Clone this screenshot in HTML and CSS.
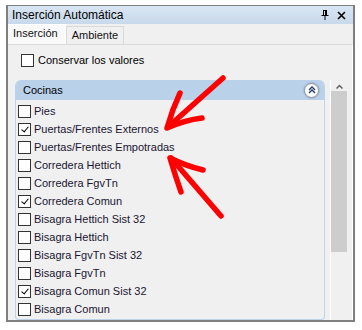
FILE: index.html
```html
<!DOCTYPE html>
<html lang="es">
<head>
  <meta charset="UTF-8" />
  <title>Inserción Automática</title>
  <link rel="stylesheet" href="styles.css">
</head>
<body>
  <div class="window">
    <div class="titlebar">
      <span class="title">Inserción Automática</span>
      <span class="tools">
        <svg width="8" height="10" viewBox="0 0 8 10"><path d="M2 0.5h4M2.5 0.5v5M5.5 0.5v5M4.5 0.5v5M0.5 5.5h7M4 5.5v4.5" stroke="#000" stroke-width="1" fill="none"/></svg>
        <svg width="9" height="9" viewBox="0 0 9 9"><path d="M1 1l7 7M8 1l-7 7" stroke="#000" stroke-width="1.6" fill="none"/></svg>
      </span>
    </div>
    <div class="tabs">
      <div class="tab active">Inserción</div>
      <div class="tab">Ambiente</div>
    </div>
    <div class="panel">
      <label class="keep"><span class="box"></span>Conservar los valores</label>
      <div class="content">
        <div class="group">
          <div class="group-head">
            <span>Cocinas</span>
            <span class="collapse">
              <svg width="8" height="8" viewBox="0 0 8 8"><path d="M1 4l3-3 3 3M1 7l3-3 3 3" stroke="#22386a" stroke-width="1.4" fill="none"/></svg>
            </span>
          </div>
          <div class="list">
            <label class="item"><span class="box"></span>Pies</label>
            <label class="item"><span class="box checked"></span>Puertas/Frentes Externos</label>
            <label class="item"><span class="box"></span>Puertas/Frentes Empotradas</label>
            <label class="item"><span class="box"></span>Corredera Hettich</label>
            <label class="item"><span class="box"></span>Corredera FgvTn</label>
            <label class="item"><span class="box checked"></span>Corredera Comun</label>
            <label class="item"><span class="box"></span>Bisagra Hettich Sist 32</label>
            <label class="item"><span class="box"></span>Bisagra Hettich</label>
            <label class="item"><span class="box"></span>Bisagra FgvTn Sist 32</label>
            <label class="item"><span class="box"></span>Bisagra FgvTn</label>
            <label class="item"><span class="box checked"></span>Bisagra Comun Sist 32</label>
            <label class="item"><span class="box"></span>Bisagra Comun</label>
          </div>
        </div>
        <div class="scrollbar">
          <div class="arrow-up">
            <svg width="7" height="5" viewBox="0 0 7 5"><path d="M0.5 4.5l3-3 3 3" stroke="#606060" stroke-width="1.5" fill="none"/></svg>
          </div>
          <div class="thumb"></div>
        </div>
      </div>
    </div>
  </div>

  <svg class="marks" width="362" height="330" viewBox="0 0 362 330">
    <g stroke="#ff0000" stroke-width="5.5" stroke-linecap="round" stroke-linejoin="round" fill="none">
      <path d="M223 78L168 127"/>
      <path d="M180 93Q172 110 167 128Q185 120 202 118"/>
      <path d="M221 216L171 158"/>
      <path d="M181 192Q175 175 170 158Q186 166 203 170"/>
    </g>
  </svg>
</body>
</html>
```

FILE: styles.css
```css
* { box-sizing: border-box; }
html, body { margin: 0; padding: 0; background: #fff; font-family: "Liberation Sans", Arial, sans-serif; font-size: 11px; color: #111; }
.window { margin: 5px 0 0 6px; width: 349px; height: 317px; border: 2px solid #7f7f7f; border-top-width: 1px; background: #f0f0f0; display: flex; flex-direction: column; }
.titlebar { height: 18px; flex: none; display: flex; align-items: center; justify-content: space-between; padding: 0 7px 0 4px; background: linear-gradient(#d9e6f3, #c7d9eb); font-size: 12px; color: #000; }
.tools { display: flex; align-items: center; gap: 8px; }
.tools svg { display: block; }
.tabs { height: 20px; flex: none; display: flex; align-items: flex-end; padding-left: 0; }
.tab { height: 18px; padding: 0 5px; line-height: 17px; border: 1px solid #d9d9d9; border-bottom: none; background: #f0f0f0; }
.tab.active { height: 20px; padding: 0 7px 0 5px; line-height: 17px; background: #f9f9f9; border-color: #fff; border-left: none; }
.panel { flex: 1; min-height: 0; display: flex; flex-direction: column; padding: 8px 4px 0 7px; border-top: 1px solid #dcdcdc; border-right: 1px solid #fff; }
.keep { display: flex; align-items: center; height: 14px; margin: 0 0 13px 6px; gap: 4px; color: #000; }
.box { width: 13px; height: 13px; flex: none; border: 1px solid #333; background: #fff; position: relative; }
.box.checked::after { content: ""; position: absolute; left: 3.5px; top: 1px; width: 3px; height: 6px; border: solid #000; border-width: 0 1.6px 1.6px 0; transform: rotate(40deg); }
.content { flex: 1; min-height: 0; display: flex; gap: 5px; }
.group { flex: 1; display: flex; flex-direction: column; border: 1px solid #bcd3ea; border-top: none; border-radius: 6px 6px 4px 4px; overflow: hidden; }
.group-head { height: 20px; flex: none; display: flex; align-items: center; justify-content: space-between; padding: 0 5px 0 7px; background: #bad1ea; color: #000; }
.collapse { width: 15px; height: 15px; border-radius: 50%; border: 1px solid #8f98a3; background: radial-gradient(#fff 55%, #e4e8ee); box-shadow: 0 0 2px rgba(0,0,0,0.35); display: flex; align-items: center; justify-content: center; }
.collapse svg { display: block; }
.list { flex: 1; padding: 2px 0 0 2px; overflow: hidden; }
.item { display: flex; align-items: center; height: 18px; gap: 3px; white-space: nowrap; color: #1a1530; }
.scrollbar { width: 18px; flex: none; display: flex; flex-direction: column; border-left: 1px solid #fff; background: #f0f0f0; }
.arrow-up { height: 11px; display: flex; align-items: center; justify-content: center; padding-top: 2px; }
.arrow-up svg { display: block; }
.thumb { height: 161px; margin: 0 1px 0 0; background: #cdcdcd; }
.marks { position: absolute; top: 0; left: 0; pointer-events: none; }
```
